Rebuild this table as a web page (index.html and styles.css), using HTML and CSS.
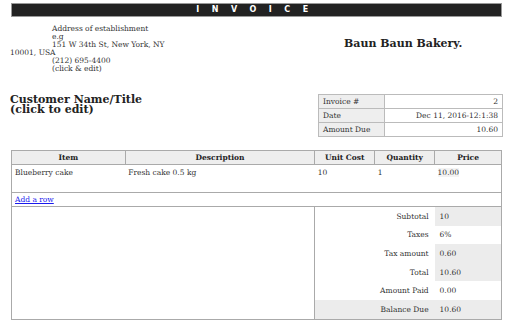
FILE: index.html
```html
<!DOCTYPE html>
<html>
<head>
<meta charset="utf-8">
<link rel="stylesheet" href="styles.css">
</head>
<body>
<div class="page">
  <div class="banner">INVOICE</div>
  <div class="top">
    <div class="address">
      <div class="ind">Address of establishment</div>
      <div class="ind">e.g</div>
      <div class="ind">151 W 34th St, New York, NY</div>
      <div>10001, USA</div>
      <div class="ind">(212) 695-4400</div>
      <div class="ind">(click &amp; edit)</div>
    </div>
    <div class="bakery">Baun Baun Bakery.</div>
  </div>
  <div class="mid">
    <div class="customer">
      <div>Customer Name/Title</div>
      <div>(click to edit)</div>
    </div>
    <table class="meta">
      <tr><td class="mk">Invoice #</td><td class="mv">2</td></tr>
      <tr><td class="mk">Date</td><td class="mv">Dec 11, 2016-12:1:38</td></tr>
      <tr><td class="mk">Amount Due</td><td class="mv">10.60</td></tr>
    </table>
  </div>
  <table class="items">
    <colgroup>
      <col class="c1"><col class="c2"><col class="c3"><col class="c4"><col class="c5">
    </colgroup>
    <tr class="head"><th>Item</th><th>Description</th><th>Unit Cost</th><th>Quantity</th><th>Price</th></tr>
    <tr class="row"><td>Blueberry cake</td><td>Fresh cake 0.5 kg</td><td>10</td><td>1</td><td><span class="price">10.00</span></td></tr>
    <tr class="add"><td colspan="5"><a href="#">Add a row</a></td></tr>
    <tr class="tot"><td colspan="2" rowspan="6" class="blank"></td><td colspan="2" class="tl">Subtotal</td><td class="tv gray">10</td></tr>
    <tr class="tot"><td colspan="2" class="tl">Taxes</td><td class="tv">6%</td></tr>
    <tr class="tot"><td colspan="2" class="tl">Tax amount</td><td class="tv gray">0.60</td></tr>
    <tr class="tot"><td colspan="2" class="tl">Total</td><td class="tv gray">10.60</td></tr>
    <tr class="tot"><td colspan="2" class="tl">Amount Paid</td><td class="tv">0.00</td></tr>
    <tr class="tot last"><td colspan="2" class="tl gray">Balance Due</td><td class="tv gray">10.60</td></tr>
  </table>
  <div class="foot"></div>
</div>
</body>
</html>
```
FILE: styles.css
```css
html, body {
  margin: 0;
  padding: 0;
  background: #fff;
  overflow: hidden;
}
body {
  font-family: "DejaVu Serif", "Liberation Serif", serif;
  font-size: 7.5px;
  color: #333;
}
.page {
  width: 491px;
  padding: 3px 0 0 11px;
}
.banner {
  height: 12px;
  background: #222;
  border: 1px solid #999;
  color: #fff;
  font-family: "DejaVu Sans", sans-serif;
  font-weight: bold;
  font-size: 8px;
  line-height: 12px;
  letter-spacing: 12.5px;
  text-align: center;
  padding-left: 4px;
}
.top {
  display: flex;
  justify-content: space-between;
  margin-top: 8px;
}
.address {
  line-height: 8px;
  margin-left: -1px;
}
.address .ind {
  padding-left: 42px;
}
.bakery {
  font-weight: bold;
  font-size: 11px;
  color: #222;
  width: 158px;
  margin-top: 12px;
  line-height: 14px;
}
.mid {
  display: flex;
  justify-content: space-between;
  margin-top: 21px;
}
.customer {
  font-weight: bold;
  font-size: 11px;
  color: #222;
  line-height: 10px;
  margin-left: -1px;
  margin-top: 1px;
}
.meta {
  border-collapse: collapse;
  width: 185px;
  margin-right: -1px;
}
.meta td {
  border: 1px solid #bbb;
  height: 13px;
  padding: 0 4px;
}
.meta .mk {
  width: 57px;
  background: #eee;
}
.meta .mv {
  text-align: right;
}
.items {
  border-collapse: collapse;
  width: 491px;
  margin-top: 13px;
  border: 1px solid #aaa;
}
.c1 { width: 114px; }
.c2 { width: 190px; }
.c3 { width: 60px; }
.c4 { width: 60px; }
.c5 { width: 67px; }
.items th {
  background: #eee;
  border: 1px solid #aaa;
  height: 13px;
  padding: 0;
  font-weight: bold;
  color: #222;
}
.items td {
  padding: 0 3px;
  vertical-align: top;
}
.row td {
  height: 24px;
  padding-top: 3px;
  border-bottom: 1px solid #aaa;
}
.price {
  background: #f3f3f3;
}
.add td {
  height: 13px;
  vertical-align: middle;
  border-bottom: 1px solid #aaa;
}
.add a {
  color: #1a1aee;
}
.blank {
  border-right: 1px solid #aaa;
}
.tot td.tl, .tot td.tv {
  height: 18.6px;
  vertical-align: middle;
}
.tl {
  text-align: right;
  padding-right: 6px !important;
}
.tv {
  padding-left: 5px !important;
}
.gray {
  background: #ececec;
}
.foot {
  margin-top: 1px;
  margin-left: -11px;
  width: 512px;
  height: 4px;
  background: #4a4a4a;
}
```
